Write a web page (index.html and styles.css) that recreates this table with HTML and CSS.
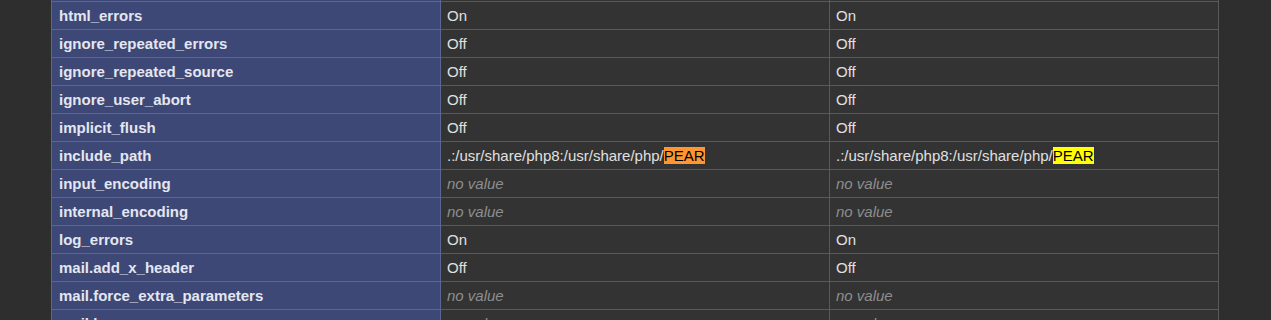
FILE: index.html
```html
<!DOCTYPE html>
<html lang="en">
<head>
    <meta charset="UTF-8">
    <title>PHP Core Configuration</title>
    <link rel="stylesheet" href="styles.css">
</head>
<body>
    <div class="center">
        <table class="directives">
            <colgroup>
                <col class="col-name">
                <col class="col-local">
                <col class="col-master">
            </colgroup>
            <tr class="spacer"><td class="e"></td><td class="v"></td><td class="v"></td></tr>
            <tr><td class="e">html_errors</td><td class="v">On</td><td class="v">On</td></tr>
            <tr><td class="e">ignore_repeated_errors</td><td class="v">Off</td><td class="v">Off</td></tr>
            <tr><td class="e">ignore_repeated_source</td><td class="v">Off</td><td class="v">Off</td></tr>
            <tr><td class="e">ignore_user_abort</td><td class="v">Off</td><td class="v">Off</td></tr>
            <tr><td class="e">implicit_flush</td><td class="v">Off</td><td class="v">Off</td></tr>
            <tr><td class="e">include_path</td><td class="v">.:/usr/share/php8:/usr/share/php/<span class="match current">PEAR</span></td><td class="v">.:/usr/share/php8:/usr/share/php/<span class="match">PEAR</span></td></tr>
            <tr><td class="e">input_encoding</td><td class="v"><i>no value</i></td><td class="v"><i>no value</i></td></tr>
            <tr><td class="e">internal_encoding</td><td class="v"><i>no value</i></td><td class="v"><i>no value</i></td></tr>
            <tr><td class="e">log_errors</td><td class="v">On</td><td class="v">On</td></tr>
            <tr><td class="e">mail.add_x_header</td><td class="v">Off</td><td class="v">Off</td></tr>
            <tr><td class="e">mail.force_extra_parameters</td><td class="v"><i>no value</i></td><td class="v"><i>no value</i></td></tr>
            <tr><td class="e">mail.log</td><td class="v"><i>no value</i></td><td class="v"><i>no value</i></td></tr>
        </table>
    </div>
</body>
</html>
```

FILE: styles.css
```css
* {
    margin: 0;
    padding: 0;
    box-sizing: border-box;
}

body {
    background: #2e2e2e;
    color: #dedede;
    font-family: 'Liberation Sans', Arial, sans-serif;
    font-size: 15px;
    overflow: hidden;
}

.center {
    display: flex;
    justify-content: center;
    padding-right: 1px;
}

.directives {
    border-collapse: collapse;
    table-layout: fixed;
    width: 1168px;
    margin-top: -27px;
}

.col-name,
.col-local {
    width: 389px;
}

.directives td {
    border: 1px solid #595959;
    padding: 5px 7px;
    height: 28px;
    line-height: 17px;
    vertical-align: baseline;
    white-space: nowrap;
    overflow: hidden;
}

.e {
    background: #3e4877;
    border-color: #5a6598 !important;
    color: #e4e6f0;
    font-weight: bold;
}

.directives .v {
    background: #333333;
    color: #e0e0e0;
    padding-left: 6px;
}

.v i {
    color: #8e8e8e;
}

/* find-in-page hits */
.match {
    background: #ffff00;
    color: #000;
}

.match.current {
    background: #ff9632;
}
```
